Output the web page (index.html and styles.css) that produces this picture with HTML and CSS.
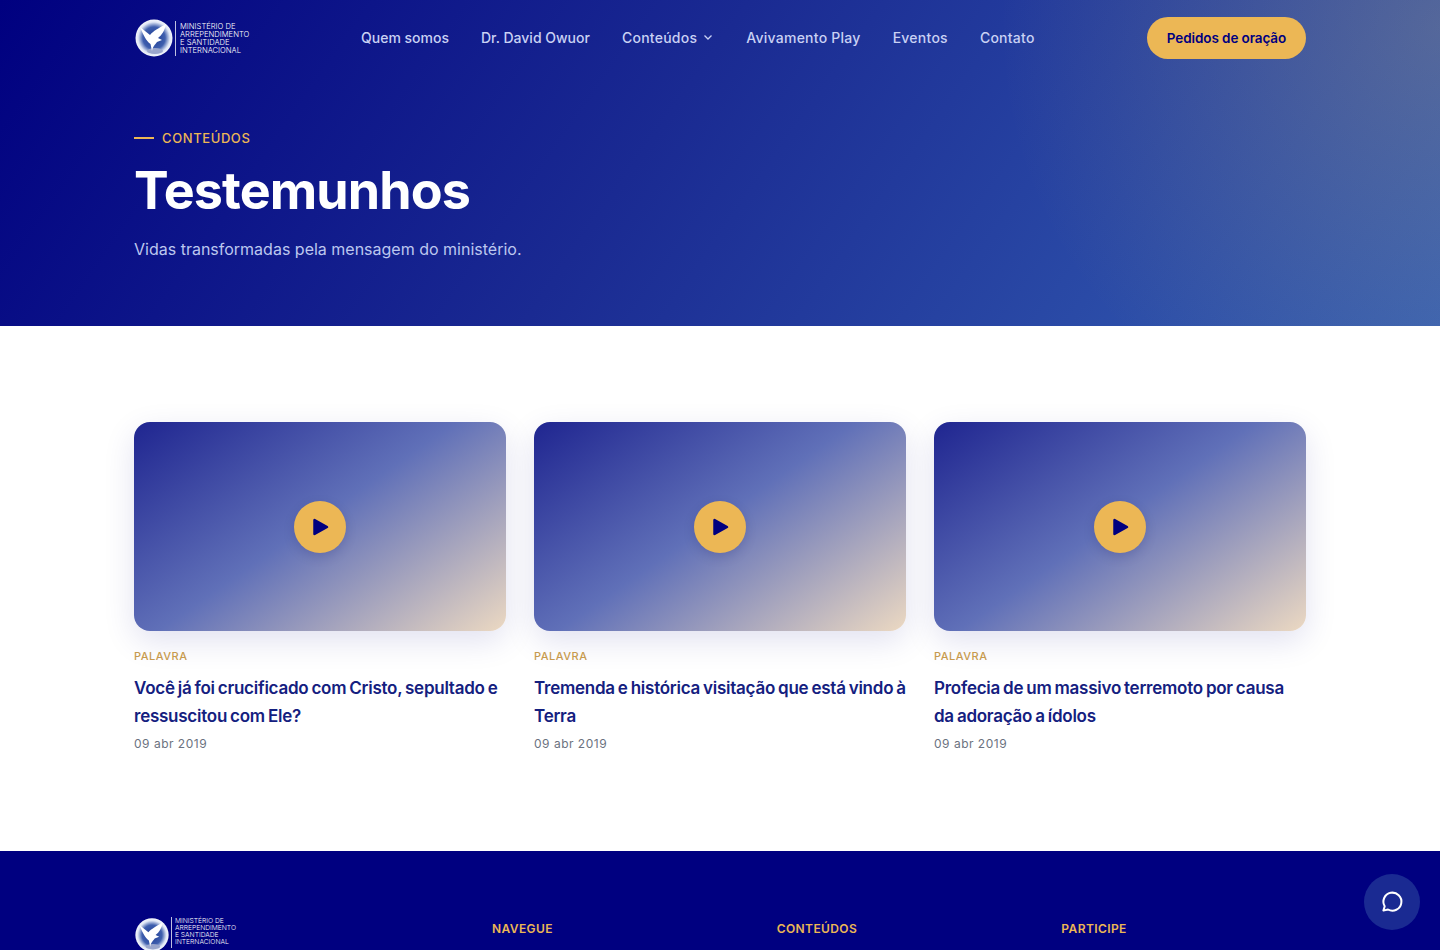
FILE: index.html
```html
<!DOCTYPE html>
<html lang="pt-BR">
<head>
    <meta charset="UTF-8">
    <meta name="viewport" content="width=device-width, initial-scale=1.0">
    <title>Testemunhos</title>
    <link rel="stylesheet" href="styles.css">
</head>
<body>
    <section class="hero">
        <header class="topbar container">
            <a class="logo" href="#">
                <svg class="logo-mark" viewBox="0 0 40 40">
                    <defs>
                        <radialGradient id="globe" cx="50%" cy="50%" r="50%">
                            <stop offset="0" stop-color="#1c3a94"/>
                            <stop offset="0.6" stop-color="#3f5fae"/>
                            <stop offset="0.86" stop-color="#dfe6f5"/>
                            <stop offset="1" stop-color="#f6f8fd"/>
                        </radialGradient>
                    </defs>
                    <circle cx="20" cy="20" r="18.5" fill="url(#globe)"/>
                    <ellipse cx="21" cy="33" rx="8" ry="3" fill="#9aa6cc"/>
                    <path d="M6 9 L16 17 C19 13 25 10 32 6 C31 12 28 17 24 20 L28 22 L23 24 C21 27 19 28 18 33 L16.5 26 C12 23 9 16 6 9 Z" fill="#fff"/>
                </svg>
                <span class="logo-text">MINISTÉRIO DE<br>ARREPENDIMENTO<br>E SANTIDADE<br>INTERNACIONAL</span>
            </a>
            <nav class="nav">
                <a href="#">Quem somos</a>
                <a href="#">Dr. David Owuor</a>
                <a href="#" class="has-menu">Conteúdos
                    <svg viewBox="0 0 12 12" class="chevron"><path d="M2.5 4.5 6 8l3.5-3.5"/></svg>
                </a>
                <a href="#">Avivamento Play</a>
                <a href="#">Eventos</a>
                <a href="#">Contato</a>
            </nav>
            <a class="pray-btn" href="#">Pedidos de oração</a>
        </header>

        <div class="hero-body container">
            <p class="eyebrow">CONTEÚDOS</p>
            <h1>Testemunhos</h1>
            <p class="lead">Vidas transformadas pela mensagem do ministério.</p>
        </div>
    </section>

    <main class="videos container">
        <article class="card">
            <a class="thumb" href="#">
                <span class="play"><svg viewBox="0 0 18 18"><path d="M3.5 2v14L16 9z"/></svg></span>
            </a>
            <p class="tag">PALAVRA</p>
            <h3>Você já foi crucificado com Cristo, sepultado e ressuscitou com Ele?</h3>
            <p class="date">09 abr 2019</p>
        </article>
        <article class="card">
            <a class="thumb" href="#">
                <span class="play"><svg viewBox="0 0 18 18"><path d="M3.5 2v14L16 9z"/></svg></span>
            </a>
            <p class="tag">PALAVRA</p>
            <h3>Tremenda e histórica visitação que está vindo à Terra</h3>
            <p class="date">09 abr 2019</p>
        </article>
        <article class="card">
            <a class="thumb" href="#">
                <span class="play"><svg viewBox="0 0 18 18"><path d="M3.5 2v14L16 9z"/></svg></span>
            </a>
            <p class="tag">PALAVRA</p>
            <h3>Profecia de um massivo terremoto por causa da adoração a ídolos</h3>
            <p class="date">09 abr 2019</p>
        </article>
    </main>

    <footer class="footer">
        <div class="footer-grid container">
            <a class="logo logo-small" href="#">
                <svg class="logo-mark" viewBox="0 0 40 40">
                    <circle cx="20" cy="20" r="18.5" fill="url(#globe)"/>
                    <ellipse cx="21" cy="33" rx="8" ry="3" fill="#9aa6cc"/>
                    <path d="M6 9 L16 17 C19 13 25 10 32 6 C31 12 28 17 24 20 L28 22 L23 24 C21 27 19 28 18 33 L16.5 26 C12 23 9 16 6 9 Z" fill="#fff"/>
                </svg>
                <span class="logo-text">MINISTÉRIO DE<br>ARREPENDIMENTO<br>E SANTIDADE<br>INTERNACIONAL</span>
            </a>
            <h4>NAVEGUE</h4>
            <h4>CONTEÚDOS</h4>
            <h4>PARTICIPE</h4>
        </div>
    </footer>

    <a class="chat" href="#">
        <svg viewBox="0 0 24 24"><path d="M3.4 20.6l1.3-4.3A9 9 0 1 1 8 19.5z"/></svg>
    </a>
</body>
</html>
```

FILE: styles.css
```css
:root {
    --navy: #000080;
    --gold: #ecb755;
    --title: #14207f;
}

* {
    box-sizing: border-box;
}

html, body {
    height: 950px;
    overflow: hidden;
}

body {
    margin: 0;
    font-family: "Inter", "Liberation Sans", sans-serif;
    background: white;
    color: var(--title);
}

a {
    color: inherit;
    text-decoration: none;
}

.container {
    width: 1172px;
    margin: 0 auto;
}

.hero {
    height: 326px;
    background:
        radial-gradient(circle at 100% 8%, rgba(236, 183, 85, 0.2), rgba(236, 183, 85, 0) 30%),
        linear-gradient(125deg, #000080 0%, #1a2a92 45%, #3560b4 100%);
}

.topbar {
    display: flex;
    align-items: center;
    height: 76px;
}

.logo {
    display: flex;
    align-items: center;
    width: 227px;
    flex-shrink: 0;
    color: white;
}

.logo-mark {
    width: 40px;
    height: 40px;
}

.logo-text {
    display: block;
    height: 35px;
    margin-left: 1px;
    padding: 2px 0 0 4px;
    border-left: 1px solid rgba(255, 255, 255, 0.75);
    font-size: 7.6px;
    line-height: 8px;
    font-weight: 300;
    white-space: nowrap;
}

.nav {
    display: flex;
    align-items: center;
    gap: 32px;
    padding-bottom: 2px;
    font-size: 14px;
    font-weight: 500;
    color: #c9d1f4;
}

.nav a:nth-child(n+3) {
    letter-spacing: 0.25px;
}

.has-menu {
    display: flex;
    align-items: center;
    gap: 5px;
}

.chevron {
    width: 12px;
    height: 12px;
    fill: none;
    stroke: currentColor;
    stroke-width: 1.3;
}

.pray-btn {
    margin-left: auto;
    height: 42px;
    width: 159px;
    justify-content: center;
    display: flex;
    align-items: center;
    border-radius: 21px;
    background: var(--gold);
    color: var(--navy);
    font-size: 13.5px;
    font-weight: 600;
    letter-spacing: -0.1px;
}

.hero-body {
    padding-top: 53px;
}

.eyebrow {
    display: flex;
    align-items: center;
    gap: 8px;
    margin: 0;
    color: var(--gold);
    font-size: 13px;
    line-height: 18px;
    font-weight: 500;
    letter-spacing: 0.6px;
}

.eyebrow::before {
    content: "";
    width: 20px;
    height: 2px;
    background: var(--gold);
}

h1 {
    margin: 13px 0 0;
    color: white;
    font-size: 52px;
    line-height: 62px;
    font-weight: 700;
    letter-spacing: -0.9px;
}

.lead {
    margin: 15px 0 0;
    color: #bcc7ef;
    font-size: 16px;
    line-height: 24px;
}

.videos {
    display: grid;
    grid-template-columns: repeat(3, 1fr);
    gap: 28px;
    padding-top: 96px;
    height: 525px;
}

.thumb {
    display: flex;
    align-items: center;
    justify-content: center;
    height: 209px;
    border-radius: 16px;
    background: linear-gradient(145deg, #1f2590 0%, #6070b8 48%, #ecd9c2 100%);
    box-shadow: 0 10px 32px rgba(0, 0, 128, 0.12);
}

.play {
    display: flex;
    align-items: center;
    justify-content: center;
    width: 52px;
    height: 52px;
    border-radius: 50%;
    background: var(--gold);
    box-shadow: 0 4px 12px rgba(0, 0, 80, 0.15);
}

.play svg {
    width: 18px;
    height: 18px;
    fill: var(--navy);
    stroke: var(--navy);
    stroke-width: 2.5;
    stroke-linejoin: round;
}

.tag {
    margin: 17px 0 0;
    color: #c79a4e;
    font-size: 11px;
    line-height: 16px;
    font-weight: 500;
    letter-spacing: 0.5px;
}

h3 {
    margin: 10px 0 0;
    color: var(--title);
    font-size: 17px;
    line-height: 28px;
    font-weight: 600;
    letter-spacing: -0.25px;
    word-spacing: -1px;
}

.date {
    margin: 5px 0 0;
    color: #6b7280;
    font-size: 12px;
    line-height: 18px;
    letter-spacing: 0.5px;
}

.footer {
    height: 99px;
    background: var(--navy);
    overflow: hidden;
}

.footer-grid {
    display: grid;
    grid-template-columns: 1.3fr 1fr 1fr 1fr;
    gap: 40px;
    padding-top: 69px;
}

.logo-small {
    width: auto;
    align-items: flex-start;
    margin-top: -3px;
}

.logo-small .logo-mark {
    width: 36px;
    height: 36px;
}

.logo-small .logo-text {
    height: 31px;
    padding: 1px 0 0 3px;
    font-size: 6.7px;
    line-height: 7.1px;
}

h4 {
    margin: 0;
    color: var(--gold);
    font-size: 12px;
    line-height: 18px;
    font-weight: 600;
    letter-spacing: 0.4px;
}

.chat {
    position: fixed;
    left: 1364px;
    top: 874px;
    width: 56px;
    height: 56px;
    display: flex;
    align-items: center;
    justify-content: center;
    border-radius: 50%;
    background: #1a2a92;
}

.chat svg {
    width: 24px;
    height: 24px;
    fill: none;
    stroke: white;
    stroke-width: 2;
    stroke-linejoin: round;
}
```
